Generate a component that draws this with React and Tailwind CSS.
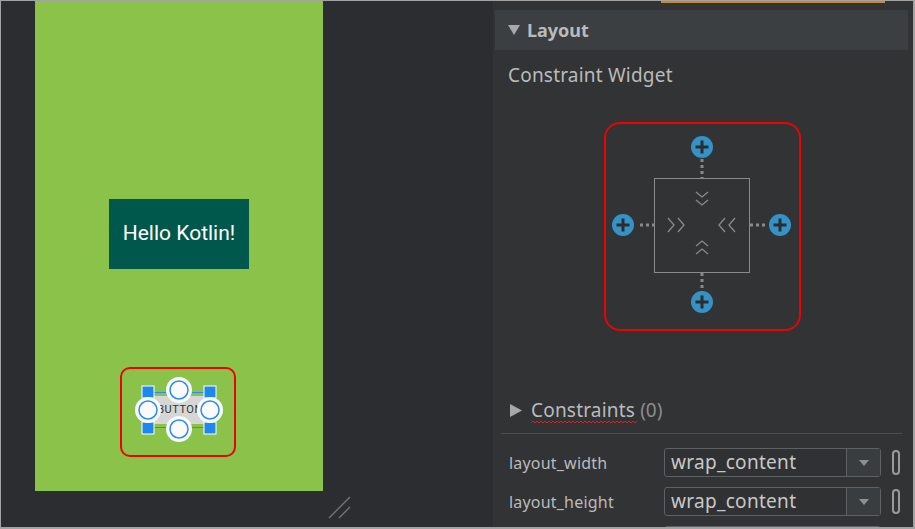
import React from "react";

const Plus = ({ cx, cy }) => (
  <g>
    <circle cx={cx} cy={cy} r="11" fill="#3592c4" />
    <rect x={cx - 6.5} y={cy - 1.5} width="13" height="3" fill="#2b2d30" />
    <rect x={cx - 1.5} y={cy - 6.5} width="3" height="13" fill="#2b2d30" />
  </g>
);

function ConstraintWidget() {
  const g = "#8a8a8a";
  return (
    <div className="relative ml-[109px] h-[209px] w-[197px] rounded-[16px] border-2 border-[#f00000]">
      <svg className="absolute left-[-2px] top-[-2px]" width="197" height="209" viewBox="0 0 197 209">
        <rect x="50.5" y="56.5" width="95" height="94" fill="none" stroke={g} strokeWidth="1" />
        <g stroke={g} strokeWidth="3" strokeDasharray="3 3">
          <line x1="98" y1="37" x2="98" y2="56" />
          <line x1="98" y1="151" x2="98" y2="170" />
          <line x1="36" y1="103" x2="50" y2="103" />
          <line x1="146" y1="103" x2="162" y2="103" />
        </g>
        <g stroke={g} strokeWidth="1.3" fill="none">
          <polyline points="92,70 98,75 104,70" />
          <polyline points="92,78 98,83 104,78" />
          <polyline points="92,124 98,119 104,124" />
          <polyline points="92,132 98,127 104,132" />
          <polyline points="64,96 70,103 64,110" />
          <polyline points="74,96 80,103 74,110" />
          <polyline points="121,96 115,103 121,110" />
          <polyline points="131,96 125,103 131,110" />
        </g>
        <Plus cx={98} cy={25} />
        <Plus cx={19} cy={103} />
        <Plus cx={176} cy={103} />
        <Plus cx={98} cy={180} />
      </svg>
    </div>
  );
}

function Dropdown() {
  return (
    <div className="flex h-[29px] w-[217px] shrink-0 rounded-[3px] border border-[#5e6163] bg-[#2f3133]">
      <div className="flex flex-1 items-center pl-[6px] text-[19px] leading-none tracking-[0.3px] text-[#c8c8c8]" style={{ fontFamily: "'Noto Sans', sans-serif" }}>
        wrap_content
      </div>
      <div className="flex w-[34px] items-center justify-center border-l border-[#5e6163] bg-[#3a3d40]">
        <svg width="10" height="6" viewBox="0 0 10 6"><polygon points="0,0 10,0 5,6" fill="#8f8f8f" /></svg>
      </div>
    </div>
  );
}

function PropRow({ label }) {
  return (
    <div className="flex h-[29px] shrink-0 items-center">
      <div className="w-[169px] shrink-0 pl-[14px] text-[16px] tracking-[0.2px] text-[#bbbbbb]" style={{ fontFamily: "'Noto Sans', sans-serif" }}>{label}</div>
      <Dropdown />
      <div className="ml-[11px] h-[25px] w-[8px] shrink-0 rounded-full border-2 border-[#9a9a9a]" />
    </div>
  );
}

export default function App() {
  const sans = { fontFamily: "'Noto Sans', 'Open Sans', sans-serif" };
  return (
    <div className="flex h-[529px] w-[915px] overflow-hidden border-t border-b-2 border-l border-r-2 border-[#a3a3a3] bg-[#2b2d30]">
      {/* Canvas */}
      <div className="relative h-full w-[492px] shrink-0 bg-[#2b2d30]">
        <div className="relative ml-[34px] h-[490px] w-[288px] bg-[#8bc34a]">
          <div className="absolute left-[74px] top-[198px] flex h-[70px] w-[140px] items-center justify-center bg-[#00574b] text-[21px] text-white" style={{ fontFamily: "Roboto, sans-serif" }}>
            Hello Kotlin!
          </div>
          <div className="absolute left-[85px] top-[366px] h-[90px] w-[116px] rounded-[10px] border-2 border-[#f00000]" />
          <div className="absolute left-[116px] top-[395px] flex h-[28px] w-[58px] items-center justify-center bg-[#d5d6d6] text-[11px] tracking-[0.5px] text-[#333]" style={{ fontFamily: "Roboto, sans-serif" }}>
            BUTTON
          </div>
          <svg className="absolute left-[100px] top-[374px]" width="90" height="72" viewBox="0 0 90 72">
            <line x1="13" y1="17.5" x2="75" y2="17.5" stroke="#2a8cf0" strokeWidth="1.2" />
            <line x1="13" y1="52.5" x2="75" y2="52.5" stroke="#2a8cf0" strokeWidth="1.2" />
            {[[7, 11], [69, 11], [7, 47], [69, 47]].map(([x, y], i) => (
              <rect key={i} x={x} y={y} width="12" height="12" fill="#1e88f0" stroke="#ffffff" strokeWidth="1" />
            ))}
            {[[44, 15], [13, 35], [75, 35], [44, 54]].map(([x, y], i) => (
              <g key={i}>
                <circle cx={x} cy={y} r="13" fill="#fafafa" />
                <circle cx={x} cy={y} r="9" fill="#fafafa" stroke="#2a8cf0" strokeWidth="1.5" />
              </g>
            ))}
          </svg>
        </div>
        <svg className="absolute left-[326px] top-[495px]" width="26" height="24" viewBox="0 0 26 24">
          <line x1="2" y1="22" x2="23" y2="1" stroke="#777" strokeWidth="1.3" />
          <line x1="12" y1="22" x2="23" y2="11" stroke="#777" strokeWidth="1.3" />
        </svg>
      </div>

      {/* Properties panel */}
      <div className="flex h-full flex-1 flex-col overflow-hidden bg-[#313335] pl-[2px] pr-[5px]" style={sans}>
        <div className="h-[9px] shrink-0">
          <div className="ml-[166px] h-[2px] w-[224px] bg-[#c98a2c]" />
        </div>
        <div className="flex h-[40px] shrink-0 items-center bg-[#3c3f41] pl-[13px]">
          <svg width="12" height="10" viewBox="0 0 12 10"><polygon points="0,0 12,0 6,10" fill="#a8a8a8" /></svg>
          <span className="ml-[7px] text-[18px] font-bold text-[#bbbbbb]">Layout</span>
        </div>
        <div className="mt-[12px] h-[26px] shrink-0 pl-[13px] text-[19px] leading-[26px] tracking-[0.2px] text-[#bbbbbb]">Constraint Widget</div>
        <div className="mt-[34px] shrink-0">
          <ConstraintWidget />
        </div>
        <div className="mt-[67px] flex h-[24px] shrink-0 items-center pl-[15px]">
          <svg width="12" height="13" viewBox="0 0 12 13"><polygon points="0,0 12,6.5 0,13" fill="#a8a8a8" /></svg>
          <div className="relative ml-[9px]">
            <span className="text-[19px] tracking-[0.2px] text-[#bbbbbb]">Constraints</span>
            <svg className="absolute left-0 top-[24px]" width="106" height="4" viewBox="0 0 106 4">
              <polyline points="0,3 2,1 4,3 6,1 8,3 10,1 12,3 14,1 16,3 18,1 20,3 22,1 24,3 26,1 28,3 30,1 32,3 34,1 36,3 38,1 40,3 42,1 44,3 46,1 48,3 50,1 52,3 54,1 56,3 58,1 60,3 62,1 64,3 66,1 68,3 70,1 72,3 74,1 76,3 78,1 80,3 82,1 84,3 86,1 88,3 90,1 92,3 94,1 96,3 98,1 100,3 102,1 104,3 106,1" fill="none" stroke="#e02020" strokeWidth="1" />
            </svg>
          </div>
          <span className="ml-[5px] text-[19px] text-[#8c8c8c]">(0)</span>
        </div>
        <div className="ml-[6px] mt-[11px] h-px w-[401px] shrink-0 bg-[#4b4e50]" />
        <div className="mt-[14px] flex shrink-0 flex-col gap-[10px]">
          <PropRow label="layout_width" />
          <PropRow label="layout_height" />
          <div className="flex h-[29px] shrink-0 items-center">
            <div className="w-[169px] shrink-0" />
            <div className="h-[29px] w-[217px] shrink-0 rounded-[3px] border border-[#5e6163]" />
          </div>
        </div>
      </div>
    </div>
  );
}
